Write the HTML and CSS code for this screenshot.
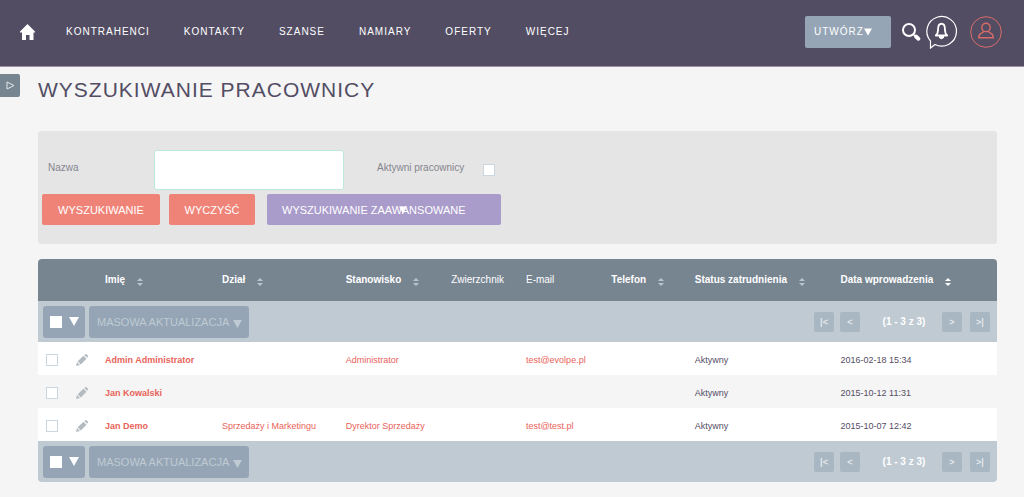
FILE: index.html
```html
<!DOCTYPE html>
<html lang="pl">
<head>
<meta charset="utf-8">
<title>Wyszukiwanie Pracownicy</title>
<link rel="stylesheet" href="styles.css">
</head>
<body>
<svg class="defs" aria-hidden="true">
  <symbol id="down" viewBox="0 0 10 9"><path d="M0 0h10L5 9z"/></symbol>
  <symbol id="sort" viewBox="0 0 6 8"><path class="up" d="M3 0l3 3H0z"/><path class="dn" d="M0 5h6L3 8z"/></symbol>
  <symbol id="pencil" viewBox="0 0 12 12"><path d="M0 12l1-4 3 3zM1.700 7.300L7.500 1.700l3 3L4.800 10.400zM8.300 1l1-.8q.6-.4 1.200.1l1.300 1.300q.5.600 0 1.200l-.7.900z"/></symbol>
</svg>
<header class="topbar">
  <nav class="nav">
    <a class="home" href="#" aria-label="Start"><svg width="15" height="16" viewBox="0 0 15 16"><path fill="#fff" d="M7.500 0L15 7.500v1h-1.500V16H9.500v-5h-3.500v5H2V8.500H0v-1z"/></svg></a>
    <a href="#">KONTRAHENCI</a>
    <a href="#">KONTAKTY</a>
    <a href="#">SZANSE</a>
    <a href="#">NAMIARY</a>
    <a href="#">OFERTY</a>
    <a href="#">WIĘCEJ</a>
  </nav>
  <div class="tools">
    <button class="create" type="button">UTWÓRZ<svg width="8" height="8"><use href="#down"/></svg></button>
    <button class="icon search" type="button" aria-label="Szukaj"><svg width="19" height="18" viewBox="0 0 19 18" fill="none" stroke="#fff"><circle cx="7" cy="7" r="6" stroke-width="2"/><path d="M11.300 11.300l2 2" stroke-width="1.500"/><path d="M14 13.500l2.500 2.300" stroke-width="3.800" stroke-linecap="round"/></svg></button>
    <button class="icon" type="button" aria-label="Powiadomienia"><svg width="32" height="34" viewBox="0 0 32 34" fill="none" stroke="#fff"><path d="M4.500 26V33L9 29.500A14.800 14.800 0 1 0 4.500 26z" stroke-width="1.200"/><path d="M9.800 20.500q2.300-2 2.300-6.500c0-7 6.800-7 6.800 0q0 4.500 2.300 6.500z" stroke-width="1.800" stroke-linejoin="round"/><path d="M13 21h5v1.500q-2.500 3.500-5 0z" fill="#fff" stroke="none"/></svg></button>
    <button class="icon user" type="button" aria-label="Profil"><svg width="32" height="32" viewBox="0 0 32 32" fill="none" stroke="#d96c69"><circle cx="16" cy="16" r="15.300"/><circle cx="16" cy="11.500" r="4.200" stroke-width="1.400"/><path d="M13.500 15q0 1.500-2 2.200-2.800 1-2.800 4.600h14.600q0-3.600-2.800-4.600-2-.7-2-2.200" stroke-width="1.400"/></svg></button>
  </div>
</header>
<main class="layout">
  <button class="side" type="button" aria-label="Panel boczny"><svg width="9" height="9" viewBox="0 0 9 9"><path d="M1 1l7 3.500L1 8z" fill="none" stroke="#e3e8ec"/></svg></button>
  <div class="content">
    <h1>WYSZUKIWANIE PRACOWNICY</h1>
    <form class="panel">
      <div class="fields">
        <label class="name-label" for="name">Nazwa</label>
        <input class="text" id="name" type="text">
        <label class="active-label" for="active">Aktywni pracownicy</label>
        <input class="check" id="active" type="checkbox">
      </div>
      <div class="actions">
        <button class="btn" type="button">WYSZUKIWANIE</button>
        <button class="btn clear" type="button">WYCZYŚĆ</button>
        <button class="btn advanced" type="button">WYSZUKIWANIE ZAAWANSOWANE<svg class="overlap" width="8" height="8"><use href="#down"/></svg></button>
      </div>
    </form>
    <table class="list">
      <colgroup><col class="c-check"><col class="c-edit"><col class="c-name"><col class="c-dept"><col class="c-post"><col class="c-boss"><col class="c-mail"><col class="c-phone"><col class="c-status"><col></colgroup>
      <thead>
        <tr>
          <th></th><th></th>
          <th>Imię<svg class="sort"><use href="#sort"/></svg></th>
          <th>Dział<svg class="sort"><use href="#sort"/></svg></th>
          <th>Stanowisko<svg class="sort"><use href="#sort"/></svg></th>
          <th class="plain">Zwierzchnik</th>
          <th class="plain">E-mail</th>
          <th>Telefon<svg class="sort"><use href="#sort"/></svg></th>
          <th>Status zatrudnienia<svg class="sort"><use href="#sort"/></svg></th>
          <th>Data wprowadzenia<svg class="sort desc"><use href="#sort"/></svg></th>
        </tr>
      </thead>
      <tbody>
        <tr class="bar"><td colspan="10"><div class="bar-row">
          <div class="select"><input class="check" type="checkbox" aria-label="Zaznacz wszystkie"><button class="more" type="button" aria-label="Opcje zaznaczania"><svg width="10" height="9"><use href="#down"/></svg></button></div>
          <button class="mass" type="button" disabled>MASOWA AKTUALIZACJA<svg width="9" height="8"><use href="#down"/></svg></button>
          <div class="pager"><button class="page" type="button">|&lt;</button><button class="page" type="button">&lt;</button><span class="count">(1 - 3 z 3)</span><button class="page" type="button">&gt;</button><button class="page last" type="button">&gt;|</button></div>
        </div></td></tr>
        <tr>
          <td><input class="check" type="checkbox" aria-label="Admin Administrator"></td>
          <td><a href="#" aria-label="Edytuj"><svg class="pencil"><use href="#pencil"/></svg></a></td>
          <td><a class="name" href="#">Admin Administrator</a></td><td></td><td><a href="#">Administrator</a></td><td></td><td><a href="#">test@evolpe.pl</a></td><td></td><td>Aktywny</td><td>2016-02-18 15:34</td>
        </tr>
        <tr class="alt">
          <td><input class="check" type="checkbox" aria-label="Jan Kowalski"></td>
          <td><a href="#" aria-label="Edytuj"><svg class="pencil"><use href="#pencil"/></svg></a></td>
          <td><a class="name" href="#">Jan Kowalski</a></td><td></td><td></td><td></td><td></td><td></td><td>Aktywny</td><td>2015-10-12 11:31</td>
        </tr>
        <tr>
          <td><input class="check" type="checkbox" aria-label="Jan Demo"></td>
          <td><a href="#" aria-label="Edytuj"><svg class="pencil"><use href="#pencil"/></svg></a></td>
          <td><a class="name" href="#">Jan Demo</a></td><td><a href="#">Sprzedaży i Marketingu</a></td><td><a href="#">Dyrektor Sprzedaży</a></td><td></td><td><a href="#">test@test.pl</a></td><td></td><td>Aktywny</td><td>2015-10-07 12:42</td>
        </tr>
        <tr class="bar"><td colspan="10"><div class="bar-row">
          <div class="select"><input class="check" type="checkbox" aria-label="Zaznacz wszystkie"><button class="more" type="button" aria-label="Opcje zaznaczania"><svg width="10" height="9"><use href="#down"/></svg></button></div>
          <button class="mass" type="button" disabled>MASOWA AKTUALIZACJA<svg width="9" height="8"><use href="#down"/></svg></button>
          <div class="pager"><button class="page" type="button">|&lt;</button><button class="page" type="button">&lt;</button><span class="count">(1 - 3 z 3)</span><button class="page" type="button">&gt;</button><button class="page last" type="button">&gt;|</button></div>
        </div></td></tr>
      </tbody>
    </table>
  </div>
</main>
</body>
</html>
```

FILE: styles.css
```css
* { box-sizing: border-box; }
body { margin: 0; background: #f5f5f5; color: #534d64; font: 10px/14px "Liberation Sans", Arial, sans-serif; }
a { color: #e8635a; text-decoration: none; }
svg { display: block; }
button { border: 0; margin: 0; padding: 0; color: #fff; font: 11px/16px "Liberation Sans", Arial, sans-serif; }
.defs { position: absolute; width: 0; height: 0; }

.topbar { display: flex; justify-content: space-between; align-items: center; height: 67px; padding: 0 22px 3px 20px; background: #534d64; border-bottom: 1px solid #9a93a6; }
.nav { display: flex; align-items: center; gap: 34px; }
.nav a { color: #fff; letter-spacing: 1px; }
.nav .home { margin-right: -3px; }
.tools { display: flex; align-items: center; }
.create { display: flex; align-items: center; width: 86px; height: 32px; margin-right: 11px; padding-left: 9px; border-radius: 2px; background: #95a5b5; font-size: 10px; letter-spacing: 1px; }
.icon { background: none; }
.search { margin-right: 5px; }
.icon svg { overflow: visible; }
.user { margin-left: 12px; }

.layout { display: grid; grid-template-columns: 20px minmax(0, 1fr); column-gap: 18px; align-items: start; padding-right: 27px; }
.side { display: grid; place-items: center; height: 23px; margin-top: 7px; border-radius: 0 2px 2px 0; background: #778591; }
h1 { margin: 10px 0 29px; font-size: 21px; line-height: 25px; font-weight: 400; letter-spacing: 1px; }

.panel { padding: 19px 4px; border-radius: 3px; background: #e5e5e5; color: #85858f; }
.fields { display: flex; align-items: center; padding-left: 6px; }
.name-label { width: 106px; padding-bottom: 4px; }
.text { width: 190px; height: 40px; border: 1px solid #bde9dc; border-radius: 3px; background: #fff; }
.active-label { width: 106px; margin-left: 33px; padding-bottom: 4px; }
.check { appearance: none; display: block; flex: none; width: 12px; height: 12px; margin: 0; border: 1px solid #ccd6de; background: #fff; }
.actions { display: flex; margin-top: 4px; }
.btn { width: 118px; height: 31px; margin-right: 9px; border-radius: 2px; background: #f08377; white-space: nowrap; }
.clear { width: 86px; }
.advanced { position: relative; width: 234px; margin-left: 3px; padding-left: 15px; background: #a99bca; text-align: left; }
.overlap { position: absolute; top: 12px; right: 94px; }
.create svg, .more svg, .overlap { fill: #fff; }

.list { width: 100%; margin-top: 15px; border-collapse: collapse; table-layout: fixed; border-radius: 4px; overflow: hidden; font-size: 9px; line-height: 12px; }
.c-check { width: 38px; }
.c-edit { width: 29px; }
.c-name { width: 12.2%; }
.c-dept { width: 12.9%; }
.c-post { width: 11%; }
.c-boss { width: 7.8%; }
.c-mail { width: 8.9%; }
.c-phone { width: 8.7%; }
.c-status { width: 15.2%; }
.list th { height: 42px; padding: 0; background: #778591; color: #fff; font-size: 10px; text-align: left; white-space: nowrap; }
.list .plain { font-weight: 400; }
.sort { display: inline-block; width: 6px; height: 8px; margin-left: 12px; vertical-align: -3px; fill: #b9c4cd; }
.desc { fill: #fff; }
.list td { height: 33px; padding: 2px 0 0; background: #fff; white-space: nowrap; }
.list .alt td { background: #f5f5f5; }
.list td > .check { margin-left: 8px; }
.name { font-weight: 700; }
.pencil { width: 12px; height: 12px; fill: #b3bac0; }

.list .bar td { height: 41px; padding: 0; background: #bfcad3; }
.bar-row { display: flex; align-items: center; padding: 0 7px 0 5px; }
.select { display: flex; align-items: center; gap: 7px; width: 42px; height: 32px; padding-left: 7px; border-radius: 3px; background: #95a5b5; }
.select .check { border-color: #fff; }
.more { background: none; }
.mass { display: flex; align-items: center; justify-content: space-between; width: 160px; height: 32px; margin-left: 4px; padding: 0 7px 0 8px; border-radius: 3px; background: #95a5b5; color: #bfcad3; fill: #bfcad3; }
.mass svg { margin-top: 4px; }
.pager { display: flex; align-items: center; margin-left: auto; }
.page { width: 20px; height: 20px; margin-right: 6px; border-radius: 2px; background: #a9b7c2; color: #e3e9ee; font: 700 9px/12px "Liberation Sans", Arial, sans-serif; }
.last { margin: 0 0 0 2px; }
.count { width: 76px; color: #fff; font-size: 10px; font-weight: 700; text-align: center; }
```
